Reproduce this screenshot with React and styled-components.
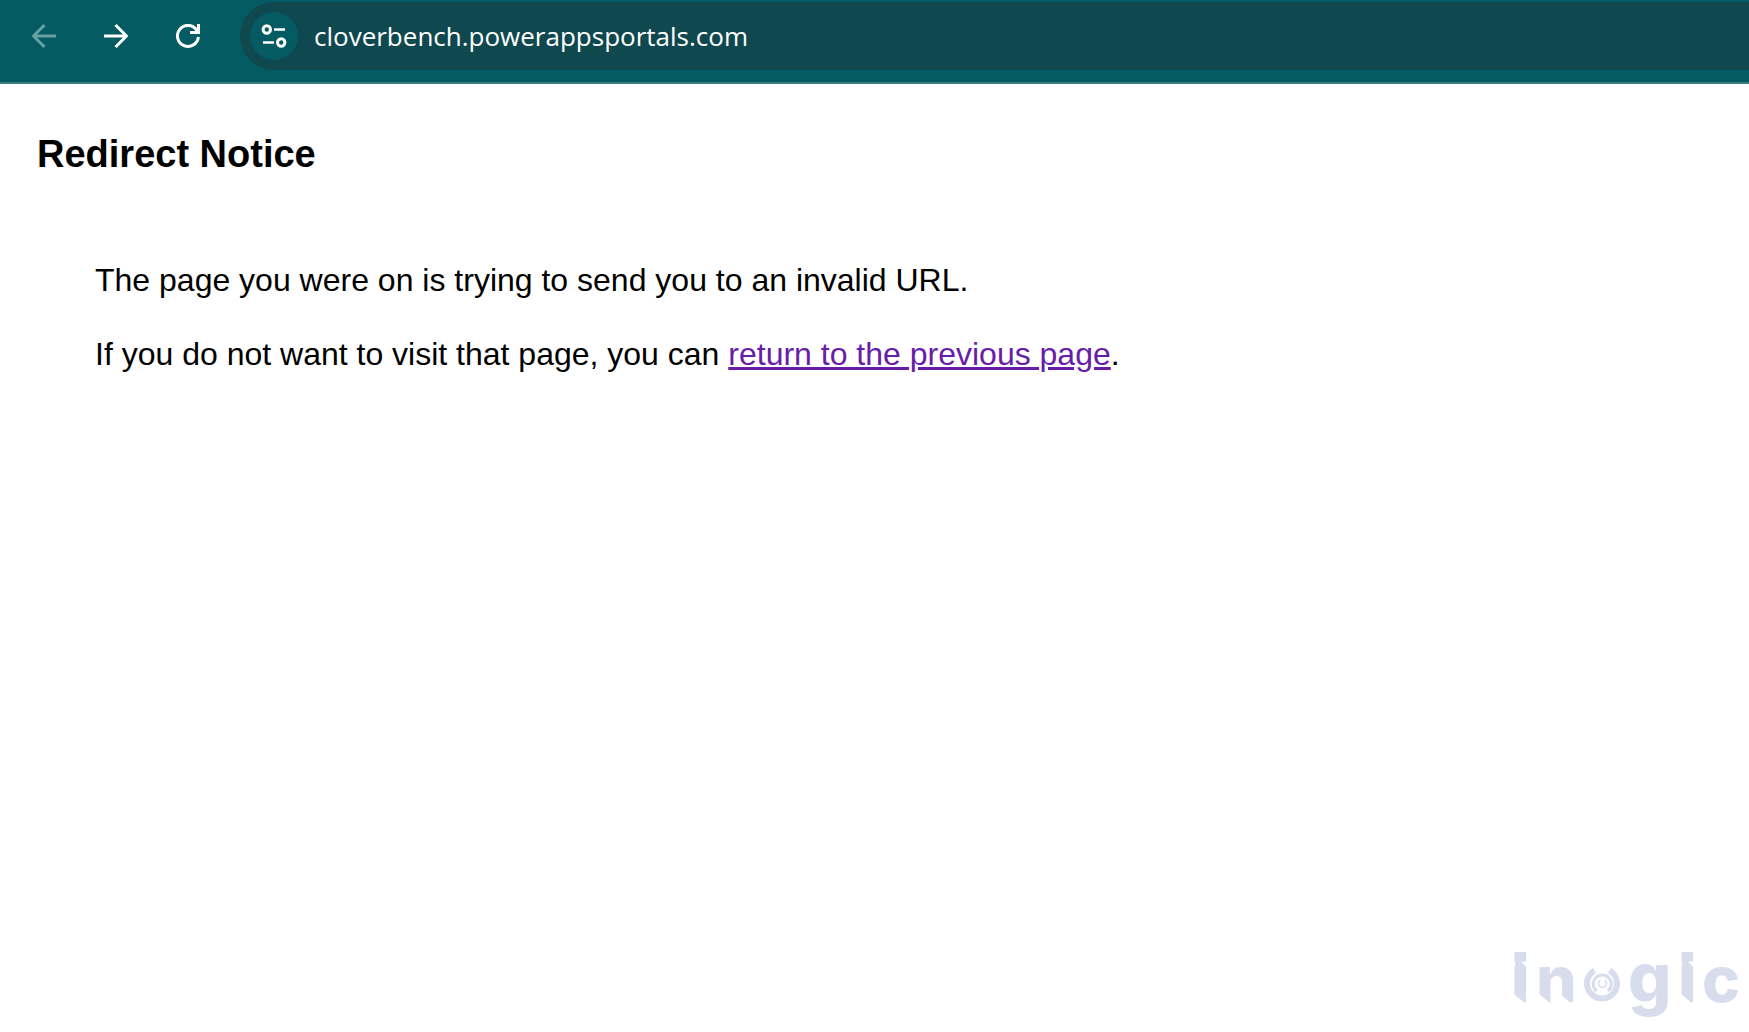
import React from "react";
import styled, { createGlobalStyle } from "styled-components";

const GlobalStyle = createGlobalStyle`
  *, *::before, *::after { box-sizing: border-box; }
  body {
    margin: 0;
    background: #fff;
    color: #000;
    font-family: "Liberation Sans", Arial, sans-serif;
  }
`;

const Page = styled.div`
  display: flex;
  flex-direction: column;
  min-height: 100vh;
`;

const Toolbar = styled.header`
  display: flex;
  align-items: center;
  padding: 2px 0 12px 20px;
  background: #045b61;
  border-bottom: 2px solid #3f7c85;
`;

const NavButtons = styled.nav`
  display: flex;
  gap: 24px;
  margin-right: 28px;
`;

const IconButton = styled.button`
  display: grid;
  place-items: center;
  width: 48px;
  height: 48px;
  padding: 0;
  border: 0;
  border-radius: 50%;
  background: transparent;
  color: ${({ disabled }) => (disabled ? "#69a0a4" : "#fff")};
`;

const SiteButton = styled(IconButton)`
  flex: none;
  background: #045b61;
`;

const AddressBar = styled.form`
  display: flex;
  flex: 1;
  align-items: center;
  gap: 16px;
  height: 68px;
  padding-left: 10px;
  border-radius: 34px 0 0 34px;
  background: #0f484f;
`;

const AddressInput = styled.input`
  flex: 1;
  min-width: 0;
  height: 48px;
  padding: 0;
  border: 0;
  outline: 0;
  background: transparent;
  color: #fff;
  font: 400 26px "Open Sans", "Segoe UI", sans-serif;
`;

const Content = styled.main`
  flex: 1;
  padding: 48px 37px;
`;

const Title = styled.h1`
  margin: 0;
  font-size: 38px;
  line-height: 44px;
`;

const Message = styled.div`
  display: grid;
  gap: 37px;
  margin: 86px 0 0 58px;
  font-size: 32px;
  line-height: 37px;
`;

const Text = styled.p`
  margin: 0;
`;

const Link = styled.a`
  color: #681da8;
`;

const Footer = styled.footer`
  display: flex;
  justify-content: flex-end;
  padding: 0 6px 4px 0;
`;

const strokeIcon = { fill: "none", stroke: "currentColor", strokeWidth: 3 };

function Arrow({ back }) {
  return (
    <svg width="24" height="24" viewBox="0 0 24 24" aria-hidden="true" {...strokeIcon}>
      <path d={back ? "M24 12H2M12.5 1 1.5 12l11 11" : "M0 12h22M11.500 1l11 11-11 11"} />
    </svg>
  );
}

function Reload() {
  return (
    <svg width="24" height="24" viewBox="0 0 24 24" aria-hidden="true" {...strokeIcon}>
      <path d="M22.400 13A10.500 10.500 0 1 1 20.500 5.800L22 8" />
      <path d="M22.500 0v8.500H14" />
    </svg>
  );
}

function SiteControls() {
  return (
    <svg width="26" height="24" viewBox="0 0 26 24" aria-hidden="true" {...strokeIcon}>
      <circle cx="5.800" cy="5.500" r="3.700" />
      <circle cx="20.200" cy="18.500" r="3.700" />
      <path d="M13 5.500h11M2 18.500h11" strokeWidth="2.600" />
    </svg>
  );
}

const Wordmark = styled.svg`
  display: block;
  fill: #d8dded;
  font: 800 64px Inter, "Liberation Sans", sans-serif;
`;

const SquareDot = styled.text`
  font: 700 66px "DejaVu Sans", sans-serif;
`;

const Descender = styled.text`
  font-size: 68px;
`;

function InogicLogo() {
  return (
    <Wordmark width="236" height="96" viewBox="0 0 236 96" role="img" aria-label="inogic">
      <SquareDot x="2" y="70">i</SquareDot>
      <text x="29" y="70">n</text>
      <g fill="none" stroke="#d8dded">
        <path d="M87.500 38.500a15 15 0 1 0 15 0" strokeWidth="6" />
        <path d="M89.500 59a9 9 0 1 1 11.600 0" strokeWidth="3" />
        <path d="M93.500 48a4 4 0 1 0 4 0" strokeWidth="1.500" />
      </g>
      <Descender x="121" y="70">g</Descender>
      <SquareDot x="169" y="70">i</SquareDot>
      <text x="195" y="70">c</text>
      <path d="M8 27h4l7 8H8zM175 27h4l7 8h-11z" />
      <path fill="#fff" d="M7 62l12 10H7zM32 62l12 10H32zM53 62l12 10H53zM174 62l12 10h-12z" />
    </Wordmark>
  );
}

export default function App() {
  return (
    <>
      <GlobalStyle />
      <Page>
        <Toolbar>
          <NavButtons aria-label="Browser navigation">
            <IconButton type="button" aria-label="Back" disabled><Arrow back /></IconButton>
            <IconButton type="button" aria-label="Forward"><Arrow /></IconButton>
            <IconButton type="button" aria-label="Reload"><Reload /></IconButton>
          </NavButtons>
          <AddressBar onSubmit={(e) => e.preventDefault()}>
            <SiteButton type="button" aria-label="View site information"><SiteControls /></SiteButton>
            <AddressInput aria-label="Address" type="text" defaultValue="cloverbench.powerappsportals.com" />
          </AddressBar>
        </Toolbar>
        <Content>
          <Title>Redirect Notice</Title>
          <Message>
            <Text>The page you were on is trying to send you to an invalid URL.</Text>
            <Text>
              If you do not want to visit that page, you can <Link href="#previous">return to the previous page</Link>.
            </Text>
          </Message>
        </Content>
        <Footer><InogicLogo /></Footer>
      </Page>
    </>
  );
}
